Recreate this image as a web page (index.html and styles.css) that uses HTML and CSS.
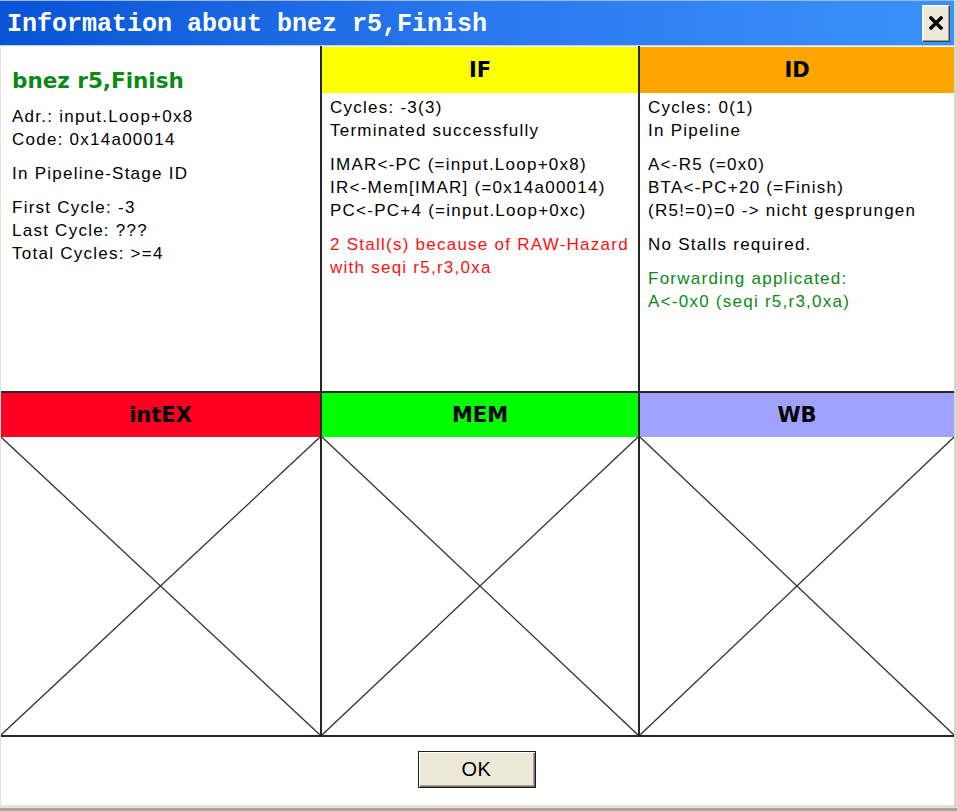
FILE: index.html
```html
<!DOCTYPE html>
<html>
<head>
<meta charset="utf-8">
<title>Information about bnez r5,Finish</title>
<link rel="stylesheet" href="styles.css">
</head>
<body>
<div class="window">
  <div class="titlebar">
    <span class="title">Information about bnez r5,Finish</span>
    <button class="close" aria-label="Close">
      <svg width="14" height="14" viewBox="0 0 14 14"><path d="M2 2 L12 12 M12 2 L2 12" stroke="#000" stroke-width="3.4" stroke-linecap="square"/></svg>
    </button>
  </div>
  <div class="client">
    <div class="grid">
      <div class="cell info">
        <div class="instr">bnez r5,Finish</div>
        <p>Adr.: input.Loop+0x8<br>Code: 0x14a00014</p>
        <p>In Pipeline-Stage ID</p>
        <p>First Cycle: -3<br>Last Cycle: ???<br>Total Cycles: &gt;=4</p>
      </div>
      <div class="cell stage">
        <div class="head if">IF</div>
        <div class="body">
          <p>Cycles: -3(3)<br>Terminated successfully</p>
          <p>IMAR&lt;-PC (=input.Loop+0x8)<br>IR&lt;-Mem[IMAR] (=0x14a00014)<br>PC&lt;-PC+4 (=input.Loop+0xc)</p>
          <p class="red">2 Stall(s) because of RAW-Hazard<br>with seqi r5,r3,0xa</p>
        </div>
      </div>
      <div class="cell stage">
        <div class="head id">ID</div>
        <div class="body">
          <p>Cycles: 0(1)<br>In Pipeline</p>
          <p>A&lt;-R5 (=0x0)<br>BTA&lt;-PC+20 (=Finish)<br>(R5!=0)=0 -&gt; nicht gesprungen</p>
          <p>No Stalls required.</p>
          <p class="green">Forwarding applicated:<br>A&lt;-0x0 (seqi r5,r3,0xa)</p>
        </div>
      </div>
      <div class="cell lower first">
        <div class="head ex">intEX</div>
        <div class="xbox"><svg viewBox="0 0 100 100" preserveAspectRatio="none"><line x1="0" y1="0" x2="100" y2="100"/><line x1="100" y1="0" x2="0" y2="100"/></svg></div>
      </div>
      <div class="cell lower stage">
        <div class="head mem">MEM</div>
        <div class="xbox"><svg viewBox="0 0 100 100" preserveAspectRatio="none"><line x1="0" y1="0" x2="100" y2="100"/><line x1="100" y1="0" x2="0" y2="100"/></svg></div>
      </div>
      <div class="cell lower stage">
        <div class="head wb">WB</div>
        <div class="xbox"><svg viewBox="0 0 100 100" preserveAspectRatio="none"><line x1="0" y1="0" x2="100" y2="100"/><line x1="100" y1="0" x2="0" y2="100"/></svg></div>
      </div>
    </div>
    <div class="buttons">
      <button class="ok">OK</button>
    </div>
  </div>
</div>
</body>
</html>
```

FILE: styles.css
```css
* { box-sizing: border-box; }
html, body { margin: 0; padding: 0; }
body {
  width: 957px;
  height: 811px;
  overflow: hidden;
  background: #a9a69c;
  font-family: "Liberation Sans", Arial, sans-serif;
}
.window {
  width: 957px;
  height: 808px;
  display: flex;
  flex-direction: column;
  background: #fff;
  border-right: 3px solid #d9d5c9;
  border-bottom: 3px solid #e4e0d2;
}
.titlebar {
  height: 46px;
  flex: none;
  display: flex;
  align-items: center;
  padding-left: 7px;
  border-top: 1px solid #9fb8e6;
  border-bottom: 1px solid #b9d0f5;
  background: linear-gradient(to right, #0853d6 0%, #2a78ee 50%, #3a92fc 100%);
}
.title {
  font-family: "Liberation Mono", "Courier New", monospace;
  font-weight: bold;
  font-size: 25px;
  color: #fff;
  line-height: 30px;
  margin-top: 3px;
  white-space: nowrap;
}
.close {
  margin-left: auto;
  margin-right: 4px;
  width: 28px;
  height: 37px;
  padding: 0;
  display: flex;
  align-items: center;
  justify-content: center;
  background: #ece9d8;
  border: 1px solid;
  border-color: #fff #404040 #404040 #fff;
  box-shadow: inset -1px -1px 0 #9d9a8c, inset 1px 1px 0 #f4f2ea;
}
.client {
  flex: 1;
  display: flex;
  flex-direction: column;
  border-left: 1px solid #e6e2d6;
}
.grid {
  display: grid;
  grid-template-columns: 319px 318px 316px;
  grid-template-rows: 345px 346px;
}
.cell {
  font-size: 17px;
  letter-spacing: 1.25px;
  line-height: 23px;
  color: #000;
  padding-top: 1px;
}
.stage { border-left: 2px solid #262626; }
.info { padding: 22px 0 0 11px; }
.instr {
  font-family: "DejaVu Sans", Verdana, sans-serif;
  font-weight: bold;
  font-size: 21.5px;
  letter-spacing: 0;
  line-height: 26px;
  color: #0a8a14;
  margin-bottom: 11px;
}
p { margin: 0; white-space: nowrap; }
p + p { margin-top: 11px; }
.head {
  flex: none;
  height: 46px;
  display: flex;
  align-items: center;
  justify-content: center;
  font-family: "DejaVu Sans", Verdana, sans-serif;
  font-weight: bold;
  font-size: 21px;
  letter-spacing: 0;
  color: #000;
}
.if { background: #ffff00; }
.id { background: #ffa500; }
.body { padding: 3px 0 0 8px; }
.red { color: #ff1010; }
.green { color: #0a8a14; }
.lower {
  padding-top: 0;
  border-top: 2px solid #262626;
  border-bottom: 2px solid #262626;
  display: flex;
  flex-direction: column;
}
.lower .head { height: 44px; }
.ex { background: #ff0022; }
.mem { background: #00ff00; }
.wb { background: #a0a0ff; }
.xbox { flex: 1; min-height: 0; }
.xbox svg { display: block; width: 100%; height: 100%; }
.xbox line { stroke: #333; stroke-width: 1.3; vector-effect: non-scaling-stroke; }
.buttons {
  flex: 1;
  display: flex;
  justify-content: center;
  padding-top: 14px;
  padding-right: 2px;
}
.ok {
  width: 118px;
  height: 37px;
  padding: 0;
  font-family: "Liberation Sans", Arial, sans-serif;
  font-size: 20px;
  letter-spacing: 0.5px;
  color: #000;
  background: #ece9d8;
  border: 1px solid #1e1e1e;
  box-shadow: inset 1px 1px 0 #fff, inset -1px -1px 0 #6d6b62, inset -2px -2px 0 #a7a596;
}
```
